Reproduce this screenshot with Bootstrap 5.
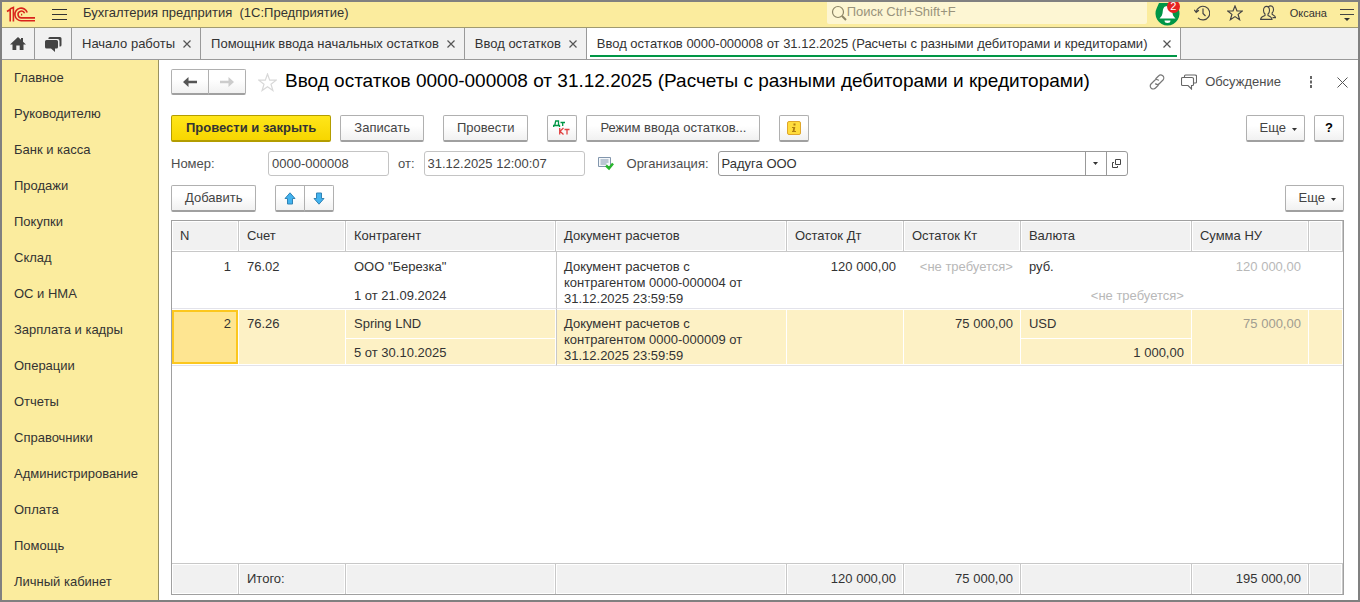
<!DOCTYPE html>
<html lang="ru">
<head>
<meta charset="utf-8">
<meta name="viewport" content="width=device-width, initial-scale=1">
<title>Ввод остатков 0000-000008</title>
<link href="https://cdn.jsdelivr.net/npm/bootstrap@5.3.0/dist/css/bootstrap.min.css" rel="stylesheet">
<style>
body{font-family:"Liberation Sans",Arial,sans-serif;font-size:13px;line-height:16px;color:#333;background:#fff;border:2px solid #808080;min-height:100vh}
button,input{font:inherit;color:inherit}
a{color:inherit;text-decoration:none}
svg{display:block;flex:none}
.plain{border:0;background:none;padding:0;display:flex;align-items:center;justify-content:center}
.topline{background:#fbec9e;border-bottom:1px solid #a09a70;height:26px}
.topline h1{font-size:13px;line-height:16px;margin:0 0 4px}
.findbox{width:320px;height:22px;background:#fdf6d3;border-radius:0 0 2px 2px;padding-left:4px;margin-bottom:3px;color:#999377}
.findbox input{border:0;background:none;padding:0 0 2px;outline:0;min-width:0}
.findbox input::placeholder{color:#99937c;opacity:1}
.bell{width:25px;height:25px}
.bell .cnt{top:-2px;right:0;width:13px;height:13px;border-radius:50%;background:#e52222;color:#fff;font-size:11px;line-height:13px;text-align:center}
.tools{gap:17px;margin:0 14px 4px 14px}
.username{font-size:11px}
.tabline{background:#f1f1f1;border-bottom:1px solid #999;height:32px}
.wtab{border-right:1px solid #999;padding:0 9px 0 10px;gap:8px}
.wtab.pic{padding:0 8px}
.wtab.talk{padding:0 9px}
.wtab.cur{background:#fff;position:relative;gap:16px}
.wtab.cur::after{content:"";position:absolute;left:3px;right:3px;bottom:2px;height:2px;background:#009646}
.side{width:157px;background:#fbec9e;border-right:1px solid #99915f}
.side a{display:flex;align-items:center;height:36px;padding-left:12px}
.work{padding:9px 14px 5px 12px;min-width:0}
.work h2{font-size:19px;line-height:22px;color:#000;margin:0 0 2px;font-weight:400}
.formhead{margin-right:-4px;margin-bottom:20px}
.g9{gap:9px}
.g20{gap:19px}
.fields{margin:9px 0}
.cbtn{height:27px;border:1px solid #b0b0b0;border-bottom:2px solid #a0a0a0;border-radius:2px;background:linear-gradient(#fff 40%,#f1f1f1);color:#444;padding:0 13px;display:flex;align-items:center;justify-content:center;white-space:nowrap}
.cbtn.main{background:linear-gradient(#ffe61a,#f7d600);border-color:#b39d00;font-weight:700;color:#333;padding:0 14px}
.cbtn.ico{width:30px;padding:0}
.cbtn.more{padding:0 6px 0 12px;gap:5px}
.cbtn.nav-b{height:26px;width:38px;padding:0}
.cbtn.first{border-radius:2px 0 0 2px}
.cbtn.last{border-radius:0 2px 2px 0;margin-left:-1px}
.fld{height:25px;border:1px solid #c4c4c4;border-radius:3px;padding:0 3px;background:#fff;color:#444;outline:0}
.combo{width:410px;height:25px;border:1px solid #999;border-radius:3px}
.combo input{border:0;padding:0 3px;outline:0;min-width:0;background:none}
.combo button{width:21px;border-left:1px solid #999}
.lbl{color:#4d4d4d}
.num-l{width:88px}
.num-f{width:121px}
.date-f{width:161px}
.gridbox{border:1px solid #a0a0a0;min-height:0}
.grid-t{table-layout:fixed;width:100%;height:100%;border-collapse:separate;border-spacing:0}
.grid-t th,.grid-t td{padding:7px 8px 0;vertical-align:top;font-weight:400;white-space:nowrap}
.grid-t thead th,.grid-t tfoot td{height:31px;background:#f1f1f1;border-right:1px solid #c8c8c8;box-shadow:inset 0 0 0 1px #fff;vertical-align:middle;padding:0 7px 0 8px}
.grid-t thead th{border-bottom:1px solid #c8c8c8}
.grid-t tfoot td{border-top:1px solid #c8c8c8}
.grid-t td.doc{white-space:normal;border-left:1px solid #c8c8c8;padding-left:7px;padding-right:30px}
.grid-t .r{text-align:right}
.grid-t .up td{height:29px}
.grid-t .dn td{height:28px;border-bottom:1px solid #e3e3ea}
.grid-t .up td[rowspan]{border-bottom:1px solid #e3e3ea}
.grid-t .sel td{background:#fdf1c5;box-shadow:inset -1px 1px 0 #fff}
.grid-t .sel.up td[rowspan],.grid-t .sel.dn td{box-shadow:inset -1px 1px 0 #fff,inset 0 -1px 0 #fff}
.grid-t .sel.up td.cell[rowspan]{background:#fee591;box-shadow:inset -1px 1px 0 #fff,inset 0 -1px 0 #fff,inset -3px 3px 0 #fcc71e,inset 2px -3px 0 #fcc71e}
.dim{color:#b8b8b8}
.sel .dim{color:#a09c90}
.grid-t .rest td{height:auto;padding:0}
</style>
</head>
<body class="d-flex flex-column">
<header class="topline d-flex align-items-center">
  <svg class="ms-1" width="30" height="18" viewBox="0 0 30 18" fill="none" stroke="#d9251c" stroke-width="1.6"><path d="M1 5.500 4.200 3.500V15.500M3.800 3 7.400 1.500V15.500"/><path d="M21.200 6.500A6.300 6.300 0 1 0 15.500 14.700H29"/><path d="M18.600 7.300A3.400 3.400 0 1 0 15.500 11.900H29"/><path d="M15 8.600h1.200"/></svg>
  <button class="plain ms-3" aria-label="Меню"><svg width="15" height="14" viewBox="0 0 15 14" stroke="#333" stroke-width="1"><path d="M0 1.500H15M0 6.500H15M0 11.500H15"/></svg></button>
  <h1 class="ms-3">Бухгалтерия предпрития&nbsp; (1С:Предприятие)</h1>
  <label class="findbox ms-auto d-flex align-items-center"><svg width="16" height="16" viewBox="0 0 16 16" fill="none" stroke="#8c8566" stroke-width="1.200"><circle cx="7" cy="7" r="5.500"/><path d="m11 11 4 4" stroke-width="2"/></svg><input class="flex-fill" type="text" placeholder="Поиск Ctrl+Shift+F" aria-label="Поиск"></label>
  <button class="plain bell position-relative ms-2" aria-label="Уведомления"><svg width="25" height="25" viewBox="0 0 25 25"><path d="M1.800 6A12 12 0 1 0 23.200 6L20 1H4Z" fill="#009646"/><path d="M12.500 4c-4 0-4.500 3-4.800 6-.3 3-1.200 4.500-3.200 6.500h16c-2-2-2.900-3.500-3.200-6.500-.3-3-.8-6-4.800-6ZM9.500 18.500h6a3 2.500 0 0 1-6 0" fill="#fff"/></svg><span class="cnt position-absolute">2</span></button>
  <div class="tools d-flex align-items-center">
  <button class="plain" aria-label="История"><svg width="16" height="16" viewBox="0 0 16 16" fill="none" stroke="#444" stroke-width="1.200"><path d="M2.200 7A6.800 6.800 0 1 1 4 12.800M.3 4.800 2.200 7.300 4.900 5.200M9 3.500V8.500L11.500 11"/></svg></button>
  <button class="plain" aria-label="Избранное"><svg width="16" height="16" viewBox="0 0 16 16" fill="none" stroke="#444" stroke-width="1.200"><path d="m8 1 2 5h5.300l-4.200 3.400 1.500 5.300L8 11.600l-4.600 3.100 1.500-5.300L.7 6H6Z"/></svg></button>
  <button class="plain" aria-label="Пользователи"><svg width="16" height="16" viewBox="0 0 16 16" fill="none" stroke="#444" stroke-width="1.100"><path d="M3.500 5.500c0-5.500 6-5.500 6 0 0 1.800-.7 2.800-1.500 3.500v1.500c1 .8 3.800 1 4 3.900H.6c.2-2.900 3.400-3.100 4.400-3.900V9C4.200 8.300 3.500 7.300 3.500 5.500ZM8.500 1.600C11-.2 13.800 1.500 13.500 5c-.1 1.500-.7 2.300-1.400 3v1.300c1 .8 3.200 1 3.400 3.300H12.500"/></svg></button>
  </div>
  <a class="username mb-1" href="#">Оксана</a>
  <button class="plain ms-3 me-1" aria-label="Сервис" style="margin-left:13px!important"><svg width="14" height="15" viewBox="0 0 14 15"><path d="M0 2.500H14M0 7.500H14" stroke="#444"/><path d="M4 11h6l-3 3Z" fill="#333"/></svg></button>
</header>
<nav class="tabline d-flex">
  <a class="wtab pic d-flex align-items-center" href="#" aria-label="Начальная страница"><svg width="16" height="15" viewBox="0 0 16 15" fill="#444"><path d="M8 1 0 8.500h2.500V14H6.300V9.500h3.400V14h3.800V8.500H16L13 5.700V2h-2v1.800Z"/></svg></a>
  <a class="wtab talk d-flex align-items-center" href="#" aria-label="Обсуждения"><svg width="18" height="16" viewBox="0 0 18 16" fill="#444"><path d="M6 1h10a1.500 1.500 0 0 1 1.500 1.500V9a1.500 1.500 0 0 1-1.500 1.500h-.5V5A2 2 0 0 0 13.500 3h-9A1.500 1.500 0 0 1 6 1Z"/><path d="M2.500 4h10A1.500 1.500 0 0 1 14 5.500V11a1.500 1.500 0 0 1-1.500 1.500H11V16l-4-3.500H2.500A1.500 1.500 0 0 1 1 11V5.500A1.500 1.500 0 0 1 2.500 4Z"/></svg></a>
  <div class="wtab d-flex align-items-center"><a href="#">Начало работы</a><button class="plain" aria-label="Закрыть"><svg width="8" height="8" viewBox="0 0 8 8" stroke="#555" stroke-width="1.200"><path d="m.5.5 7 7m0-7-7 7"/></svg></button></div>
  <div class="wtab d-flex align-items-center"><a href="#">Помощник ввода начальных остатков</a><button class="plain" aria-label="Закрыть"><svg width="8" height="8" viewBox="0 0 8 8" stroke="#555" stroke-width="1.200"><path d="m.5.5 7 7m0-7-7 7"/></svg></button></div>
  <div class="wtab d-flex align-items-center"><a href="#">Ввод остатков</a><button class="plain" aria-label="Закрыть"><svg width="8" height="8" viewBox="0 0 8 8" stroke="#555" stroke-width="1.200"><path d="m.5.5 7 7m0-7-7 7"/></svg></button></div>
  <div class="wtab cur d-flex align-items-center"><a href="#">Ввод остатков 0000-000008 от 31.12.2025 (Расчеты с разными дебиторами и кредиторами)</a><button class="plain" aria-label="Закрыть"><svg width="8" height="8" viewBox="0 0 8 8" stroke="#555" stroke-width="1.200"><path d="m.5.5 7 7m0-7-7 7"/></svg></button></div>
</nav>
<div class="d-flex flex-fill">
  <nav class="side flex-shrink-0">
    <a href="#">Главное</a><a href="#">Руководителю</a><a href="#">Банк и касса</a><a href="#">Продажи</a><a href="#">Покупки</a><a href="#">Склад</a><a href="#">ОС и НМА</a><a href="#">Зарплата и кадры</a><a href="#">Операции</a><a href="#">Отчеты</a><a href="#">Справочники</a><a href="#">Администрирование</a><a href="#">Оплата</a><a href="#">Помощь</a><a href="#">Личный кабинет</a>
  </nav>
  <main class="work flex-fill d-flex flex-column">
    <div class="formhead d-flex align-items-center">
      <button class="cbtn nav-b first" aria-label="Назад"><svg width="14" height="10" viewBox="0 0 14 10"><path d="M0 5 5.500 0V3.700H14V6.300H5.500V10Z" fill="#555"/></svg></button>
      <button class="cbtn nav-b last" aria-label="Вперед"><svg width="14" height="10" viewBox="0 0 14 10"><path d="M14 5 8.500 0V3.700H0V6.300H8.500V10Z" fill="#ccc"/></svg></button>
      <button class="plain mx-2 ps-1" aria-label="В избранное"><svg width="19" height="19" viewBox="0 0 19 19" fill="none" stroke="#d8d8d8" stroke-width="1.200"><path d="m9.500 1 2.200 6.200h6.500l-5.200 4 1.900 6.300-5.400-3.800-5.400 3.800L6 11.200l-5.200-4h6.500Z"/></svg></button>
      <h2>Ввод остатков 0000-000008 от 31.12.2025 (Расчеты с разными дебиторами и кредиторами)</h2>
      <button class="plain ms-auto" aria-label="Ссылка"><svg width="16" height="16" viewBox="0 0 16 16" fill="none" stroke="#777" stroke-width="1.200"><path d="m6.500 5 3-3a2.800 2.800 0 0 1 4.500 4L10.500 9.500a2.700 2.700 0 0 1-4.200 0M9.500 11l-3 3A2.800 2.800 0 0 1 2 10L5.500 6.500a2.700 2.700 0 0 1 4.200 0"/></svg></button>
      <button class="plain ms-3 gap-2 me-4"><svg width="16" height="16" viewBox="0 0 16 16" fill="none" stroke="#666" stroke-width="1.100"><path d="M3.500 3.500V2q0-1 1-1H14q1.500 0 1.500 1v6q0 1-1 1H13M1.500 3.500H11q1.500 0 1.500 1v6q0 1-1 1H10.500v3.500L7 11.500H1.500q-1 0-1-1v-6q0-1 1-1Z"/></svg><span class="lbl">Обсуждение</span></button>
      <button class="plain ms-1 me-4" aria-label="Ещё"><svg width="4" height="12" viewBox="0 0 4 12" fill="#666"><path d="M1 0h2v3H1zM1 4.500h2v3H1zM1 9h2v3H1z"/></svg></button>
      <button class="plain" aria-label="Закрыть форму"><svg width="11" height="11" viewBox="0 0 11 11" stroke="#555"><path d="m.5.5 10 10m0-10-10 10"/></svg></button>
    </div>
    <div class="d-flex align-items-center g20">
      <div class="d-flex g9"><button class="cbtn main">Провести и закрыть</button><button class="cbtn">Записать</button></div>
      <button class="cbtn">Провести</button>
      <div class="d-flex g9"><button class="cbtn ico" aria-label="Дт Кт"><svg width="18" height="18" viewBox="0 0 18 18" fill="none" stroke-width="1.300"><path d="M.7 8V6.500H6.500V8M1.700 6.500 2.700 2H5.500V6.500M7.500 3.500H12M9.700 3.500V7" stroke="#009646"/><path d="M6.700 9V15.500M10.500 9 7 12.200 10.500 15.500M11.500 10.500H16.500M14 10.500V15.500" stroke="#e04040"/></svg></button>
      <button class="cbtn">Режим ввода остатков...</button></div>
      <button class="cbtn ico" aria-label="Информация"><svg width="14" height="14" viewBox="0 0 14 14"><rect x=".5" y=".5" width="13" height="13" rx="1.500" fill="#ffdc3c" stroke="#dfa62c"/><path d="M6.500 2.500h2v2h-2zM5 6h3.300L7.500 10H9v1H5v-1h.7l.5-3H5Z" fill="#b07d10"/></svg></button>
      <div class="d-flex g9 ms-auto"><button class="cbtn more">Еще <svg class="mt-1" width="7" height="4" viewBox="0 0 7 4"><path d="M1 0h5L3.500 3Z" fill="#333"/></svg></button>
      <button class="cbtn ico fw-bold text-black">?</button></div>
    </div>
    <div class="d-flex align-items-center g9 fields">
      <label class="lbl num-l" for="num">Номер:</label>
      <input class="fld num-f" id="num" value="0000-000008">
      <label class="lbl" for="dt">от:</label>
      <input class="fld date-f" id="dt" value="31.12.2025 12:00:07">
      <svg class="ms-1" width="20" height="15" viewBox="0 0 20 15"><path d="M.5 1.500h12v9H.5z" fill="#f4f7fa" stroke="#8296ad"/><path d="M2.500 4h8M2.500 6h8M2.500 8h6" stroke="#8296ad"/><path d="m8 9.500 3 3 4-5" fill="none" stroke="#28b52c" stroke-width="2.500"/></svg>
      <label class="lbl" for="org">Организация:</label>
      <div class="combo d-flex"><input class="flex-fill" id="org" value="Радуга ООО"><button class="plain" aria-label="Выбрать"><svg width="5" height="3" viewBox="0 0 5 3"><path d="M0 0h5L2.500 3Z" fill="#333"/></svg></button><button class="plain" aria-label="Открыть"><svg width="9" height="9" viewBox="0 0 9 9" fill="none" stroke="#444"><path d="M3.500.5h5v5h-5zM2 3.500H.5v5h5V7"/></svg></button></div>
    </div>
    <div class="d-flex align-items-center g20 mb-2">
      <button class="cbtn">Добавить</button>
      <div class="d-flex"><button class="cbtn ico first" aria-label="Вверх"><svg width="12" height="13" viewBox="0 0 12 13"><path d="M6 .8 11 6.500H8.500v5.500h-5V6.500H1Z" fill="#43b3ef" stroke="#3284b5"/></svg></button>
      <button class="cbtn ico last" aria-label="Вниз"><svg width="12" height="13" viewBox="0 0 12 13"><path d="M6 12.200 11 6.500H8.500V1h-5v5.500H1Z" fill="#43b3ef" stroke="#3284b5"/></svg></button></div>
      <button class="cbtn more ms-auto">Еще <svg class="mt-1" width="7" height="4" viewBox="0 0 7 4"><path d="M1 0h5L3.500 3Z" fill="#333"/></svg></button>
    </div>
    <div class="gridbox flex-fill d-grid">
      <table class="grid-t">
        <colgroup><col style="width:67px"><col style="width:107px"><col style="width:210px"><col><col style="width:117px"><col style="width:117px"><col style="width:171px"><col style="width:117px"><col style="width:34px"></colgroup>
        <thead><tr><th>N</th><th>Счет</th><th>Контрагент</th><th>Документ расчетов</th><th>Остаток Дт</th><th>Остаток Кт</th><th>Валюта</th><th>Сумма НУ</th><th></th></tr></thead>
        <tbody>
          <tr class="up"><td rowspan="2" class="r">1</td><td rowspan="2">76.02</td><td>ООО "Березка"</td><td rowspan="2" class="doc">Документ расчетов с контрагентом 0000-000004 от 31.12.2025 23:59:59</td><td rowspan="2" class="r">120 000,00</td><td rowspan="2" class="r dim">&lt;не требуется&gt;</td><td>руб.</td><td rowspan="2" class="r dim">120 000,00</td><td rowspan="2"></td></tr>
          <tr class="dn"><td>1 от 21.09.2024</td><td class="r dim">&lt;не требуется&gt;</td></tr>
          <tr class="up sel"><td rowspan="2" class="r cell">2</td><td rowspan="2">76.26</td><td>Spring LND</td><td rowspan="2" class="doc">Документ расчетов с контрагентом 0000-000009 от 31.12.2025 23:59:59</td><td rowspan="2"></td><td rowspan="2" class="r">75 000,00</td><td>USD</td><td rowspan="2" class="r dim">75 000,00</td><td rowspan="2"></td></tr>
          <tr class="dn sel"><td>5 от 30.10.2025</td><td class="r">1 000,00</td></tr>
          <tr class="rest"><td colspan="9"></td></tr>
        </tbody>
        <tfoot><tr><td></td><td>Итого:</td><td></td><td></td><td class="r">120 000,00</td><td class="r">75 000,00</td><td></td><td class="r">195 000,00</td><td></td></tr></tfoot>
      </table>
    </div>
  </main>
</div>
<script src="https://cdn.jsdelivr.net/npm/bootstrap@5.3.0/dist/js/bootstrap.bundle.min.js"></script>
</body>
</html>
